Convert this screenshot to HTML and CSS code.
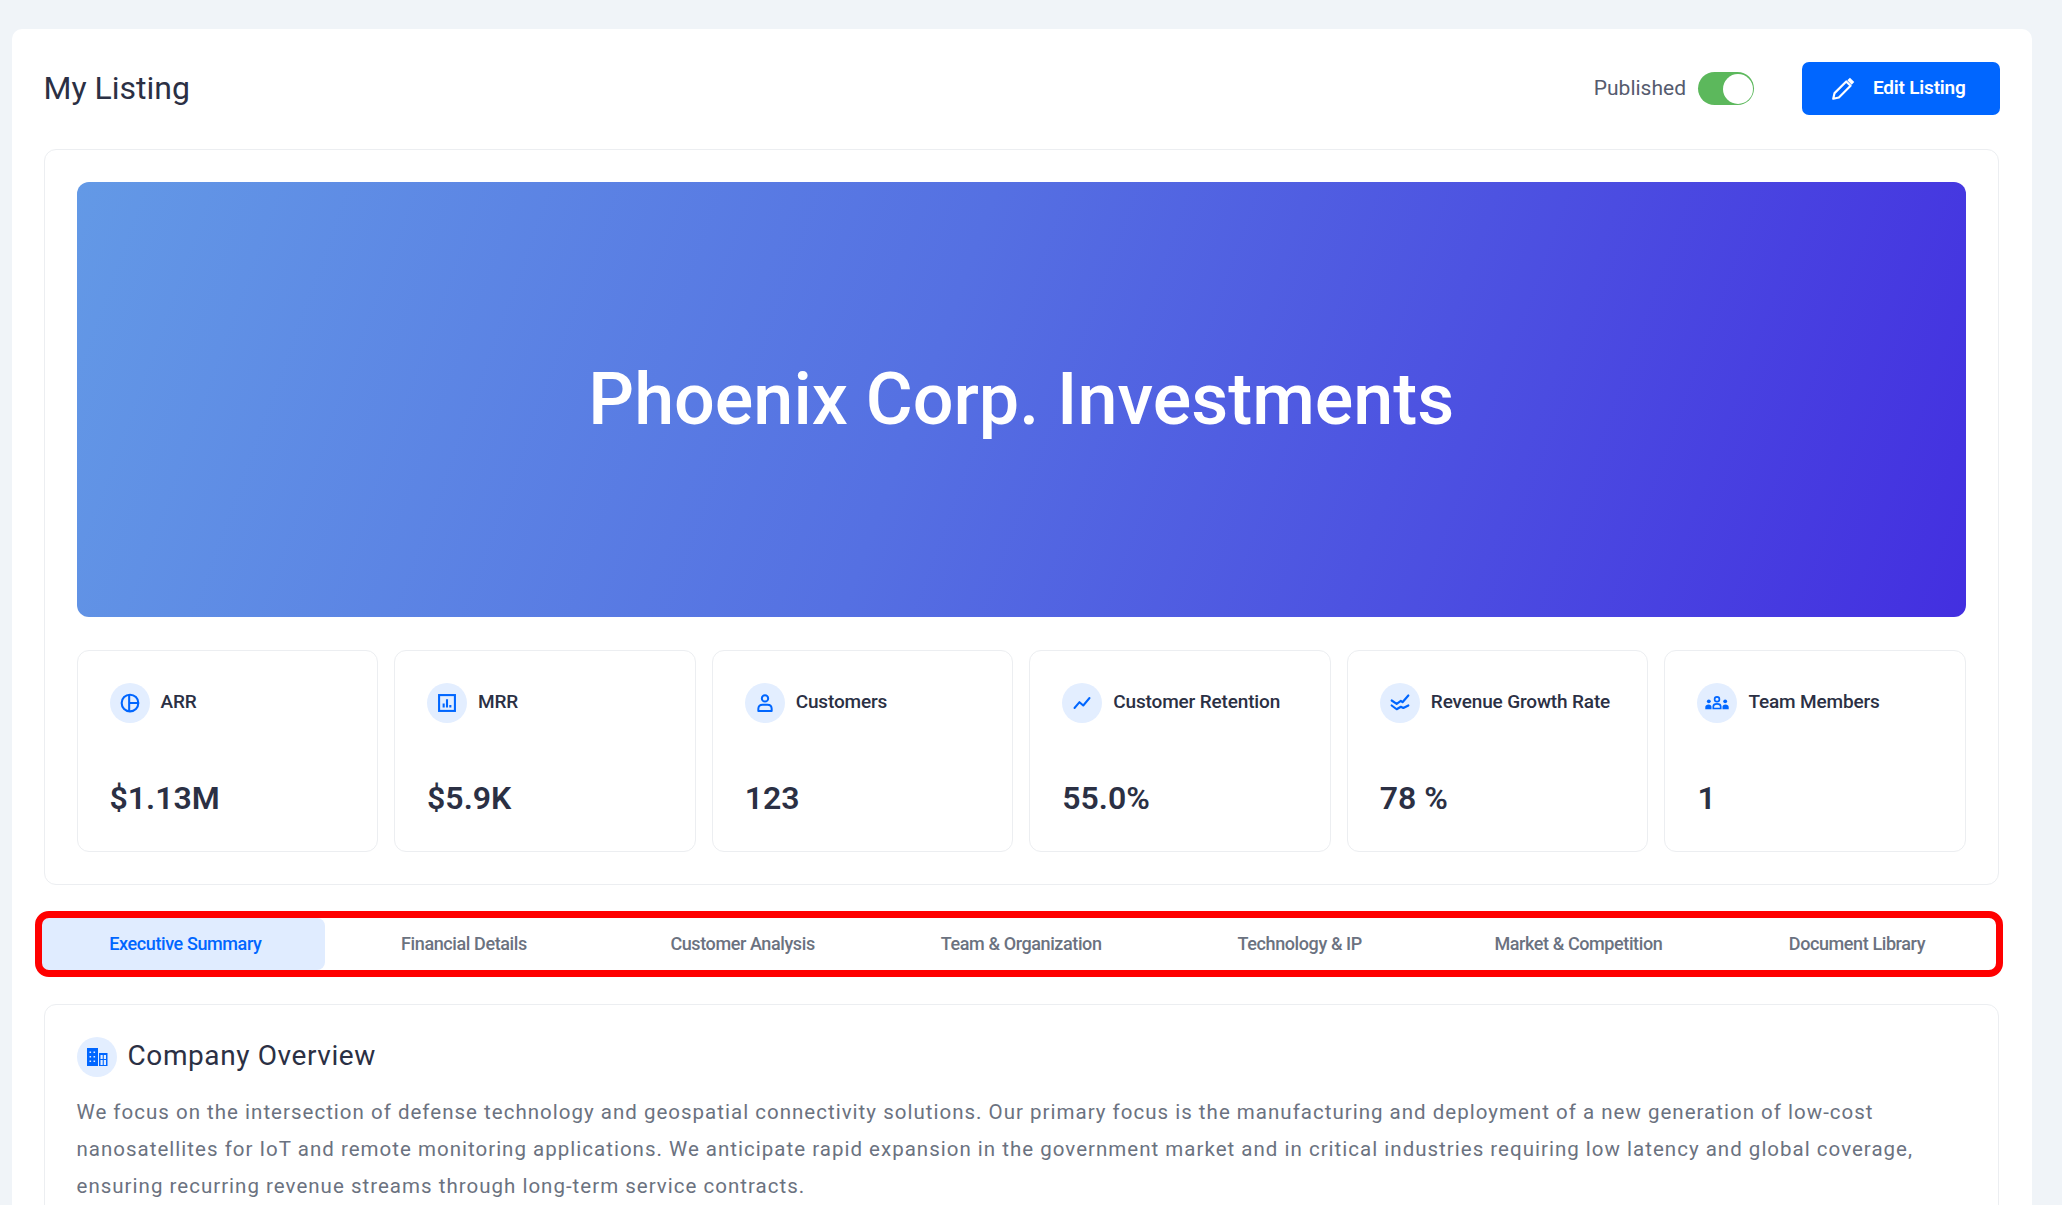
FILE: index.html
```html
<!DOCTYPE html>
<html lang="en">
<head>
    <meta charset="UTF-8">
    <title>My Listing</title>
    <link rel="stylesheet" href="styles.css">
</head>
<body>
    <div class="page-card">
        <div class="page-header">
            <h1 class="page-title">My Listing</h1>
            <div class="header-actions">
                <div class="publish-state">
                    <span class="publish-label">Published</span>
                    <span class="toggle"><span class="toggle-knob"></span></span>
                </div>
                <button class="edit-button">
                    <svg class="edit-icon" viewBox="0 0 24 24" fill="none" stroke="#fff" stroke-width="2" stroke-linejoin="round"><path d="M3 21l1.200-5.200L15 5l4 4L8.200 19.800z"/><path d="M17.200 2.800l4 4" stroke-width="3.400"/></svg>
                    <span class="edit-label">Edit Listing</span>
                </button>
            </div>
        </div>

        <div class="summary-card">
            <div class="hero">
                <div class="hero-title">Phoenix Corp. Investments</div>
            </div>
            <div class="stats">
                <div class="stat">
                    <div class="stat-head">
                        <span class="icon-circle">
                            <svg viewBox="0 0 24 24" fill="none" stroke="#0066ff" stroke-width="2.500"><circle cx="12" cy="12" r="10"/><path d="M11 2v20M11 12h11"/></svg>
                        </span>
                        <span class="stat-label">ARR</span>
                    </div>
                    <div class="stat-value">$1.13M</div>
                </div>
                <div class="stat">
                    <div class="stat-head">
                        <span class="icon-circle">
                            <svg viewBox="0 0 24 24" fill="none" stroke="#0066ff" stroke-width="2.500"><rect x="2.500" y="2.500" width="19" height="19"/><path d="M8 17.500v-5M12 17.500V7.500M16 17.500v-3"/></svg>
                        </span>
                        <span class="stat-label">MRR</span>
                    </div>
                    <div class="stat-value">$5.9K</div>
                </div>
                <div class="stat">
                    <div class="stat-head">
                        <span class="icon-circle">
                            <svg viewBox="0 0 24 24" fill="none" stroke="#0066ff" stroke-width="2.400" stroke-linejoin="round"><circle cx="12" cy="6.500" r="3.800"/><path d="M4 21.500v-2.500c0-3 2-5 5-5h6c3 0 5 2 5 5v2.500z"/></svg>
                        </span>
                        <span class="stat-label">Customers</span>
                    </div>
                    <div class="stat-value">123</div>
                </div>
                <div class="stat">
                    <div class="stat-head">
                        <span class="icon-circle">
                            <svg viewBox="0 0 24 24" fill="none" stroke="#0066ff" stroke-width="2.400" stroke-linecap="round" stroke-linejoin="round"><path d="M3 18l6-7 4.500 4L21 6"/></svg>
                        </span>
                        <span class="stat-label">Customer Retention</span>
                    </div>
                    <div class="stat-value">55.0%</div>
                </div>
                <div class="stat">
                    <div class="stat-head">
                        <span class="icon-circle">
                            <svg viewBox="0 0 24 24" fill="none" stroke="#0066ff" stroke-width="2.600" stroke-linecap="round" stroke-linejoin="round"><path d="M2 9l6 4 5-3.500 2 1.500 7-8"/><path d="M2 15l6 4.500 5-3 3 1.500 6-3"/></svg>
                        </span>
                        <span class="stat-label">Revenue Growth Rate</span>
                    </div>
                    <div class="stat-value">78 %</div>
                </div>
                <div class="stat">
                    <div class="stat-head">
                        <span class="icon-circle icon-large">
                            <svg viewBox="0 0 24 24"><g fill="none" stroke="#0066ff" stroke-width="1.700"><circle cx="12" cy="8.300" r="2.400"/><path d="M8.300 17.500v-2c0-1.500 1.500-2.600 3.700-2.600s3.700 1.100 3.700 2.600v2z"/></g><g fill="#0066ff"><circle cx="3.800" cy="10.300" r="1.900"/><circle cx="20.200" cy="10.300" r="1.900"/><path d="M.3 18.300v-2.300c0-1.500 1.400-2.500 3.300-2.500s2.900 1 2.900 2.500v2.300zM23.700 18.300v-2.300c0-1.500-1.400-2.500-3.300-2.500s-2.900 1-2.900 2.500v2.300z"/></g></svg>
                        </span>
                        <span class="stat-label">Team Members</span>
                    </div>
                    <div class="stat-value">1</div>
                </div>
            </div>
        </div>

        <div class="tabs">
            <div class="tab active">Executive Summary</div>
            <div class="tab">Financial Details</div>
            <div class="tab">Customer Analysis</div>
            <div class="tab">Team &amp; Organization</div>
            <div class="tab">Technology &amp; IP</div>
            <div class="tab">Market &amp; Competition</div>
            <div class="tab">Document Library</div>
        </div>

        <div class="section-card">
            <div class="section-head">
                <span class="icon-circle icon-large">
                    <svg viewBox="0 0 24 24" fill="#0066ff"><path fill-rule="evenodd" d="M2 3h11v18H2zM4.500 6.500v1.600h1.600V6.500zM8.500 6.500v1.600h1.600V6.500zM4.500 11v1.600h1.600V11zM8.500 11v1.600h1.600V11zM4.500 15.500v1.600h1.600v-1.600zM8.500 15.500v1.600h1.600v-1.600z"/><path fill-rule="evenodd" d="M14 8h8.500v13H14zM15.500 10v10h5.500V10z"/><path d="M15 14h6.500v1.100H15zM17.700 10h1.100v10h-1.100z"/></svg>
                </span>
                <h2 class="section-title">Company Overview</h2>
            </div>
            <p class="section-text">We focus on the intersection of defense technology and geospatial connectivity solutions. Our primary focus is the manufacturing and deployment of a new generation of low-cost nanosatellites for IoT and remote monitoring applications. We anticipate rapid expansion in the government market and in critical industries requiring low latency and global coverage, ensuring recurring revenue streams through long-term service contracts.</p>
        </div>
    </div>
</body>
</html>
```

FILE: styles.css
```css
html, body {
    height: 100%;
    overflow: hidden;
}

body {
    margin: 0;
    padding: 29px 30px 0 11.5px;
    box-sizing: border-box;
    background: #f0f4f8;
    font-family: Roboto, "Liberation Sans", sans-serif;
    color: #2b3044;
}

.page-card {
    background: #fff;
    border-radius: 10px;
    padding: 33px 33px 60px 32px;
}

.page-header {
    display: flex;
    justify-content: space-between;
    align-items: center;
    margin-right: -1px;
    margin-bottom: 34px;
}

.page-title {
    margin: 0 0 2px;
    font-size: 32px;
    font-weight: 400;
}

.header-actions {
    display: flex;
    align-items: center;
    gap: 48px;
}

.publish-state {
    display: flex;
    align-items: center;
    gap: 12px;
}

.publish-label {
    margin-bottom: 2px;
    font-size: 21px;
    color: #555b6e;
}

.toggle {
    display: flex;
    justify-content: flex-end;
    width: 56px;
    height: 33px;
    border-radius: 17px;
    background: #5cb85c;
}

.toggle-knob {
    width: 30px;
    height: 30px;
    margin: 1.5px;
    border-radius: 50%;
    background: #fff;
}

.edit-button {
    display: flex;
    align-items: center;
    gap: 17px;
    width: 198px;
    height: 53px;
    padding: 0 0 0 28px;
    border: none;
    border-radius: 7px;
    background: #0066ff;
    color: #fff;
    font-family: inherit;
    font-size: 19px;
    font-weight: 600;
    letter-spacing: -0.2px;
}

.edit-icon {
    width: 26px;
    height: 26px;
}

.edit-label {
    margin-bottom: 2px;
}

.summary-card {
    border: 1px solid #eceef1;
    border-radius: 12px;
    padding: 32px;
}

.hero {
    display: flex;
    justify-content: center;
    align-items: center;
    height: 435px;
    border-radius: 12px;
    background: linear-gradient(110deg, #6399e6 0%, #5570e2 45%, #432fe0 100%);
}

.hero-title {
    color: #fff;
    font-size: 71.9px;
    font-weight: 500;
}

.stats {
    display: grid;
    grid-template-columns: repeat(6, 1fr);
    gap: 16px;
    margin-top: 33px;
}

.stat {
    height: 202px;
    box-sizing: border-box;
    padding: 32px;
    border: 1.5px solid #eceef1;
    border-radius: 12px;
}

.stat-head {
    display: flex;
    align-items: center;
    gap: 11px;
}

.icon-circle {
    display: flex;
    justify-content: center;
    align-items: center;
    flex-shrink: 0;
    width: 40px;
    height: 40px;
    border-radius: 50%;
    background: #e3eeff;
}

.icon-circle svg {
    width: 20px;
    height: 20px;
}

.icon-large svg {
    width: 24px;
    height: 24px;
}

.stat-label {
    margin-bottom: 3px;
    font-size: 19px;
    font-weight: 500;
    letter-spacing: -0.15px;
    white-space: nowrap;
}

.stat-value {
    margin-top: 56px;
    font-size: 32px;
    font-weight: 600;
}

.tabs {
    position: relative;
    display: grid;
    grid-template-columns: repeat(7, 278.6px);
    margin-top: 33px;
    padding-left: 2.6px;
}

/* red highlight round the tab bar */
.tabs::after {
    content: "";
    position: absolute;
    inset: -7px -4px -7px -9px;
    border: 7px solid #f00;
    border-radius: 14px;
    pointer-events: none;
}

.tab {
    height: 52px;
    line-height: 52px;
    text-align: center;
    border-radius: 8px;
    color: #6b7280;
    font-size: 18px;
    font-weight: 500;
    letter-spacing: -0.4px;
}

.tab.active {
    margin-left: -5px;
    padding-left: 5px;
    background: #e0ecff;
    color: #0066ff;
}

.section-card {
    margin-top: 34px;
    padding: 32px;
    border: 1px solid #eceef1;
    border-radius: 12px;
}

.section-head {
    display: flex;
    align-items: center;
    gap: 11px;
}

.section-title {
    margin: 0 0 4px;
    font-size: 28px;
    font-weight: 400;
    letter-spacing: 0.6px;
}

.section-text {
    margin: 17px 0 0;
    color: #6b7280;
    font-size: 20.5px;
    line-height: 36.8px;
    letter-spacing: 1.01px;
}
```
